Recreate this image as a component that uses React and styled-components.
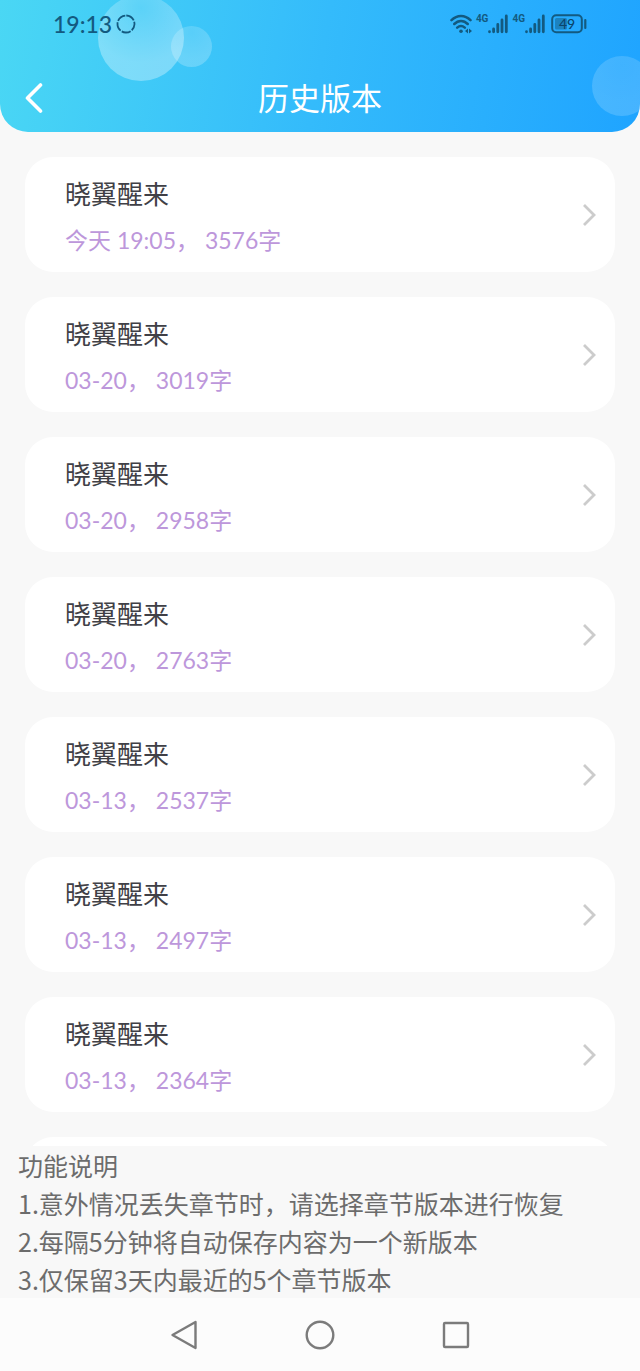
import React from 'react';
import styled, { createGlobalStyle } from 'styled-components';

const GlobalStyle = createGlobalStyle`
  * {
    box-sizing: border-box;
  }

  body {
    margin: 0;
    background-color: #f8f8f8;
    font-family: Lato, 'Noto Sans CJK SC', sans-serif;
  }

  button {
    border: 0;
    padding: 0;
    background: none;
    font-family: inherit;
    cursor: pointer;
  }
`

const Page = styled.div`
  display: flex;
  flex-direction: column;
  height: 100vh;
`

const Header = styled.header`
  position: relative;
  flex-shrink: 0;
  overflow: hidden;
  border-radius: 0 0 28px 28px;
  background: linear-gradient(100deg, #4ad7f4 0%, #34bbfb 50%, #1fa4ff 100%);
`

const Bubble = styled.span`
  position: absolute;
  top: ${props => props.$top}px;
  left: ${props => props.$left};
  width: ${props => props.$size}px;
  height: ${props => props.$size}px;
  border-radius: 50%;
  background: radial-gradient(circle at 50% 15%, rgba(255, 255, 255, 0.14) 0%, rgba(255, 255, 255, ${props => props.$glow}) 65%);
`

const StatusBar = styled.div`
  position: relative;
  display: flex;
  align-items: center;
  justify-content: space-between;
  height: 48px;
  padding: 0 53px;
  color: #135a80;
`

const StatusGroup = styled.div`
  display: flex;
  align-items: center;
  gap: 4px;

  & svg {
    display: block;
  }
`

const Clock = styled.span`
  font-size: 23px;
  line-height: 30px;
  font-weight: 500;
`

const Signal = styled.span`
  display: flex;
  align-items: flex-start;
  height: 20px;

  & b {
    font-family: Roboto, sans-serif;
    font-size: 10px;
    line-height: 10px;
  }
`

const TitleBar = styled.div`
  position: relative;
  display: grid;
  grid-template-columns: 68px 1fr 68px;
  align-items: center;
  height: 84px;
  padding-top: 16px;

  & h1 {
    margin: 0;
    font-size: 31px;
    line-height: 44px;
    font-weight: 400;
    text-align: center;
    color: white;
  }
`

const BackButton = styled.button`
  display: flex;
  justify-content: center;
  height: 44px;
  align-items: center;
`

const VersionList = styled.ul`
  flex: 1;
  min-height: 0;
  overflow: hidden;
  display: flex;
  flex-direction: column;
  gap: 25px;
  margin: 0;
  padding: 25px 25px 0;
  list-style: none;

  & li {
    flex-shrink: 0;
    height: 115px;
    border-radius: 28px;
    background-color: white;
  }
`

const VersionButton = styled.button`
  display: flex;
  align-items: center;
  justify-content: space-between;
  width: 100%;
  height: 100%;
  padding: 0 18px 0 40px;
  text-align: left;
`

const VersionText = styled.span`
  display: flex;
  flex-direction: column;
  padding-top: 5px;
`

const VersionTitle = styled.span`
  font-size: 26px;
  line-height: 46px;
  color: #404046;
`

const VersionInfo = styled.span`
  font-size: 23px;
  line-height: 46px;
  color: #bd97db;
`

const Notes = styled.section`
  flex-shrink: 0;
  padding: 0 18px;
  font-family: 'Noto Sans CJK SC', sans-serif;
  font-size: 25px;
  line-height: 38px;
  color: #6c6c6c;

  & h2, & p {
    margin: 0;
    font-size: inherit;
    font-weight: 400;
  }
`

const NavBar = styled.nav`
  display: flex;
  flex-shrink: 0;
  justify-content: center;
  height: 73px;
  background-color: #fcfcfc;

  & button {
    display: flex;
    align-items: center;
    justify-content: center;
    width: 136px;
  }

  & svg {
    fill: none;
    stroke: #7b7b7b;
    stroke-width: 2.4;
    stroke-linejoin: round;
  }
`

const versions = [
  { time: '今天 19:05', count: 3576 },
  { time: '03-20', count: 3019 },
  { time: '03-20', count: 2958 },
  { time: '03-20', count: 2763 },
  { time: '03-13', count: 2537 },
  { time: '03-13', count: 2497 },
  { time: '03-13', count: 2364 },
]

const notes = [
  '1.意外情况丢失章节时，请选择章节版本进行恢复',
  '2.每隔5分钟将自动保存内容为一个新版本',
  '3.仅保留3天内最近的5个章节版本',
]

function MobileSignal() {
  return (
    <Signal>
      <b>4G</b>
      <svg width="20" height="20" viewBox="0 0 20 20" fill="none" stroke="currentColor" strokeWidth="2.8" strokeLinecap="round">
        <path d="M1.5 17.7v.1M5.6 15v2.8M9.8 10.5v7.3M14 6v11.8M18.3 2v15.8" />
      </svg>
    </Signal>
  )
}

function StatusIcons() {
  return (
    <StatusGroup>
      <svg width="23" height="20" viewBox="0 0 23 20" fill="none" stroke="currentColor" strokeWidth="2.5" strokeLinecap="round">
        <path d="M2.5 6.2C8 .6 16 .6 21.5 6.2M5.3 10C9.3 6 14.7 6 18.7 10M8.2 13.7C10.5 11.6 13.5 11.6 15.8 13.7" />
        <circle cx="12" cy="17.2" r="1.8" fill="currentColor" stroke="none" />
        <path d="M19 14.4v5L16 16.900zM20 14.4v5L23 16.900z" fill="currentColor" stroke="none" />
      </svg>
      <MobileSignal />
      <MobileSignal />
      <svg width="38" height="20" viewBox="-2 0 38 20">
        <rect x="1.2" y="1.2" width="29.6" height="17" rx="4" fill="none" stroke="currentColor" strokeWidth="2" />
        <rect x="4" y="4" width="12" height="11.5" rx="1.5" fill="currentColor" opacity="0.5" />
        <rect x="33.2" y="5" width="2.2" height="10" rx="1" fill="currentColor" />
        <text x="16" y="14.5" textAnchor="middle" fontSize="14" fontWeight="500" fill="#0b456b">49</text>
      </svg>
    </StatusGroup>
  )
}

function App() {
  return (
    <>
      <GlobalStyle />
      <Page>
        <Header>
          <Bubble $top={-5} $left="98px" $size={86} $glow={0.32} />
          <Bubble $top={26} $left="171px" $size={41} $glow={0.22} />
          <Bubble $top={56} $left="calc(100% - 48px)" $size={60} $glow={0.17} />
          <StatusBar>
            <StatusGroup>
              <Clock>19:13</Clock>
              <svg width="20" height="20" viewBox="0 0 20 20" fill="none" stroke="currentColor" strokeWidth="1.8">
                <circle cx="10" cy="10" r="8.5" strokeDasharray="9.3 1.38" transform="rotate(-88 10 10)" />
              </svg>
            </StatusGroup>
            <StatusIcons />
          </StatusBar>
          <TitleBar>
            <BackButton aria-label="返回">
              <svg width="18" height="30" viewBox="0 0 18 30" fill="none" stroke="white" strokeWidth="3.6" strokeLinecap="round" strokeLinejoin="round">
                <path d="M15.5 2L2.5 15L15.5 28" />
              </svg>
            </BackButton>
            <h1>历史版本</h1>
          </TitleBar>
        </Header>

        <VersionList>
          {versions.map((el, idx) => (
            <li key={idx}>
              <VersionButton>
                <VersionText>
                  <VersionTitle>晓翼醒来</VersionTitle>
                  <VersionInfo>{el.time}， {el.count}字</VersionInfo>
                </VersionText>
                <svg width="15" height="24" viewBox="0 0 15 24" fill="none" stroke="#cccccc" strokeWidth="2.8">
                  <path d="M2 2L12 12L2 22" />
                </svg>
              </VersionButton>
            </li>
          ))}
          <li aria-hidden="true" />
        </VersionList>

        <Notes>
          <h2>功能说明</h2>
          {notes.map(el => <p key={el}>{el}</p>)}
        </Notes>

        <NavBar>
          <button aria-label="后退">
            <svg width="30" height="32" viewBox="0 0 30 32"><path d="M26.5 3L3.5 16L26.5 29z" /></svg>
          </button>
          <button aria-label="主页">
            <svg width="32" height="32" viewBox="0 0 32 32"><circle cx="16" cy="16" r="13.3" /></svg>
          </button>
          <button aria-label="最近任务">
            <svg width="30" height="30" viewBox="0 0 30 30"><rect x="3" y="3" width="24" height="24" rx="1" /></svg>
          </button>
        </NavBar>
      </Page>
    </>
  )
}

export default App
